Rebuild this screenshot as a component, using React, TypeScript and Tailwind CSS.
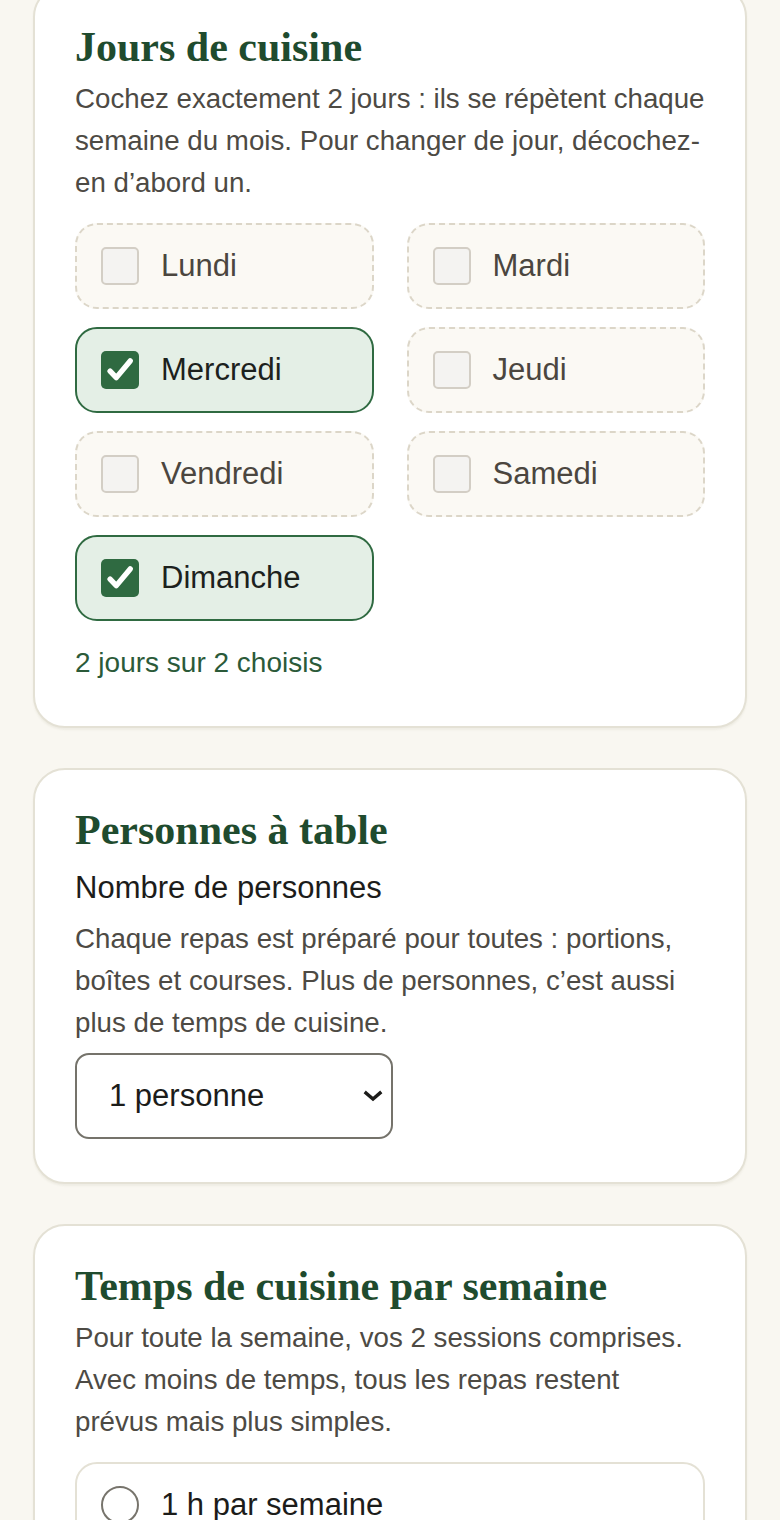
import React from "react";

const days = [
  { name: "Lundi", checked: false },
  { name: "Mardi", checked: false },
  { name: "Mercredi", checked: true },
  { name: "Jeudi", checked: false },
  { name: "Vendredi", checked: false },
  { name: "Samedi", checked: false },
  { name: "Dimanche", checked: true },
];

function DayOption({ name, checked }: { name: string; checked: boolean }) {
  return (
    <label
      className={
        checked
          ? "flex h-[86px] items-center gap-[22px] rounded-[22px] border-2 border-solid border-[#2f6a41] bg-[#e4efe6] pl-[24px]"
          : "flex h-[86px] items-center gap-[22px] rounded-[22px] border-2 border-dashed border-[#dcd6c8] bg-[#fbf9f4] pl-[24px]"
      }
    >
      {checked ? (
        <span className="flex h-[38px] w-[38px] items-center justify-center rounded-[5px] bg-[#2f6a41]">
          <svg width="34" height="34" viewBox="0 0 24 24" fill="none">
            <path d="M5 12.8l4.4 4.6L19.2 5.6" stroke="#ffffff" strokeWidth="3.8" strokeLinecap="round" strokeLinejoin="round" />
          </svg>
        </span>
      ) : (
        <span className="h-[38px] w-[38px] rounded-[5px] border-2 border-[#d3cec5] bg-[#f4f3f1]" />
      )}
      <span className={checked ? "text-[31px] text-[#1c211d]" : "text-[31px] text-[#4b463f]"}>{name}</span>
    </label>
  );
}

export default function App() {
  return (
    <div className="min-h-screen overflow-hidden bg-[#f9f7f1] px-[33px] pb-[40px] font-['Liberation_Sans',Arial,sans-serif]">
      <div className="-mt-[15px] flex flex-col gap-[40px]">
        {/* Card 1 */}
        <section className="rounded-[32px] border-2 border-[#e4e1d5] bg-white px-[40px] pb-[42px] pt-[38px] shadow-[0_2px_2px_rgba(120,110,80,0.08)]">
          <h2 className="font-['Liberation_Serif',serif] text-[42px] font-bold leading-[44px] text-[#1f4b2e]">
            Jours de cuisine
          </h2>
          <p className="mt-[9px] text-[27.7px] leading-[42px] text-[#4d4a44]">
            Cochez exactement 2 jours : ils se répètent chaque semaine du mois. Pour changer de jour, décochez-en d’abord un.
          </p>
          <div className="mt-[19px] grid grid-cols-2 gap-x-[33px] gap-y-[18px]">
            {days.map((d) => (
              <DayOption key={d.name} name={d.name} checked={d.checked} />
            ))}
          </div>
          <p className="mt-[21px] text-[28px] leading-[42px] text-[#2b5a39]">2 jours sur 2 choisis</p>
        </section>

        {/* Card 2 */}
        <section className="rounded-[32px] border-2 border-[#e4e1d5] bg-white px-[40px] pb-[43px] pt-[38px] shadow-[0_2px_2px_rgba(120,110,80,0.08)]">
          <h2 className="font-['Liberation_Serif',serif] text-[42px] font-bold leading-[44px] text-[#1f4b2e]">
            Personnes à table
          </h2>
          <p className="mt-[15px] text-[31px] leading-[42px] text-[#1c1c1a]">Nombre de personnes</p>
          <p className="mt-[9px] text-[27.7px] leading-[42px] text-[#4d4a44]">
            Chaque repas est préparé pour toutes : portions, boîtes et courses. Plus de personnes, c’est aussi plus de temps de cuisine.
          </p>
          <div className="relative mt-[9px] flex h-[86px] w-[318px] items-center rounded-[14px] border-2 border-[#75736b] bg-white pl-[32px]">
            <span className="text-[31px] text-[#1c1c1a]">1 personne</span>
            <svg className="absolute right-[8px] top-1/2 -translate-y-1/2" width="20" height="14" viewBox="0 0 20 14" fill="none">
              <path d="M3 4l7 6 7-6" stroke="#1c1c1a" strokeWidth="3.4" strokeLinecap="square" />
            </svg>
          </div>
        </section>

        {/* Card 3 */}
        <section className="rounded-[32px] border-2 border-[#e4e1d5] bg-white px-[40px] pb-[40px] pt-[38px] shadow-[0_2px_2px_rgba(120,110,80,0.08)]">
          <h2 className="font-['Liberation_Serif',serif] text-[42px] font-bold leading-[44px] text-[#1f4b2e]">
            Temps de cuisine par semaine
          </h2>
          <p className="mt-[9px] text-[27.7px] leading-[42px] text-[#4d4a44]">
            Pour toute la semaine, vos 2 sessions comprises. Avec moins de temps, tous les repas restent prévus mais plus simples.
          </p>
          <div className="mt-[19px] flex flex-col gap-[18px]">
            {["1 h par semaine", "2 h par semaine", "3 h par semaine"].map((t) => (
              <label key={t} className="flex h-[86px] items-center gap-[22px] rounded-[22px] border-2 border-[#e4e1d5] bg-white pl-[24px]">
                <span className="h-[38px] w-[38px] rounded-full border-2 border-[#77746c] bg-white" />
                <span className="text-[31px] text-[#1c1c1a]">{t}</span>
              </label>
            ))}
          </div>
        </section>
      </div>
    </div>
  );
}
